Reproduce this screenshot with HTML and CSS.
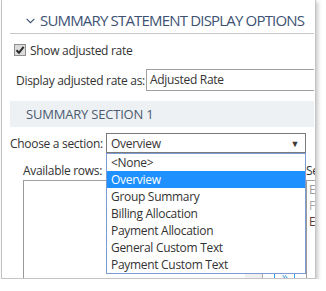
FILE: index.html
```html
<!DOCTYPE html>
<html>
<head>
<meta charset="utf-8">
<link rel="stylesheet" href="styles.css">
</head>
<body>
<div class="panel">
  <div class="title">
    <svg class="chev" width="9" height="6" viewBox="0 0 9 6"><polyline points="0.6,0.8 4.5,4.7 8.4,0.8" fill="none" stroke="#3d5273" stroke-width="1.1"/></svg>
    <span>SUMMARY STATEMENT DISPLAY OPTIONS</span>
  </div>
  <div class="check-row">
    <span class="cb"><svg width="10" height="10" viewBox="0 0 10 10"><polyline points="1.5,5.2 4,7.8 8.6,1.8" fill="none" stroke="#2b2b2b" stroke-width="2"/></svg></span>
    <span>Show adjusted rate</span>
  </div>
  <div class="field-row">
    <span class="label">Display adjusted rate as:</span>
    <div class="input">Adjusted Rate</div>
  </div>
  <div class="section-head">SUMMARY SECTION 1</div>
  <div class="choose-row">
    <span class="label">Choose a section:</span>
    <div class="select">
      <span>Overview</span>
      <span class="arrow">&#9660;</span>
      <ul class="dropdown">
        <li>&lt;None&gt;</li>
        <li class="hl">Overview</li>
        <li>Group Summary</li>
        <li>Billing Allocation</li>
        <li>Payment Allocation</li>
        <li>General Custom Text</li>
        <li>Payment Custom Text</li>
      </ul>
    </div>
  </div>
  <div class="rows">
    <div class="avail">
      <div class="col-label">Available rows:</div>
      <div class="listbox"></div>
    </div>
    <div class="buttons">
      <div class="btn-row">
        <span class="btn gray"></span>
        <span class="btn blue">&raquo;</span>
      </div>
    </div>
    <div class="selected">
      <div class="col-label">Selected rows:</div>
      <div class="listbox sel">
        <div class="item i1">Eligibility</div>
        <div class="item i2">Fees</div>
        <div class="item i3">Expenses</div>
      </div>
    </div>
  </div>
</div>
</body>
</html>
```
FILE: styles.css
```css
html, body {
  margin: 0;
  padding: 0;
  background: #ffffff;
}
body {
  font-family: "Open Sans", "Noto Sans", sans-serif;
  font-size: 12px;
  letter-spacing: -0.3px;
  color: #333333;
}
.panel {
  margin-left: 1px;
  width: 315px;
  height: 279px;
  box-sizing: border-box;
  border-left: 1px solid #c4c4c4;
  border-right: 1px solid #c4c4c4;
  border-bottom: 1px solid #c4c4c4;
  box-shadow: 2px 2px 4px rgba(0, 0, 0, 0.22);
  padding: 0 1px 0 8px;
  overflow: hidden;
  position: relative;
}
.title {
  border-bottom: 1px solid #c8c8c8;
  display: flex;
  align-items: center;
  padding-left: 16px;
  padding-top: 7px;
  box-sizing: border-box;
  height: 34px;
  color: #3d5273;
  font-size: 15px;
  letter-spacing: -0.82px;
  white-space: nowrap;
}
.chev {
  margin-right: 5px;
  margin-top: 2px;
}
.check-row {
  margin-top: 6px;
  height: 20px;
  display: flex;
  align-items: center;
  padding-left: 4px;
  gap: 4px;
  white-space: nowrap;
}
.cb {
  width: 12px;
  height: 12px;
  box-sizing: border-box;
  border: 1px solid #8e8e8e;
  background: #dcdcdc;
  display: flex;
  align-items: center;
  justify-content: center;
}
.label {
  white-space: nowrap;
  flex-shrink: 0;
}
.field-row {
  margin-top: 9px;
  display: flex;
  align-items: center;
  padding-left: 6px;
}
.field-row .label {
  width: 130px;
}
.input {
  flex: 1;
  height: 22px;
  box-sizing: border-box;
  border: 1px solid #a0a0a0;
  border-right: none;
  padding-left: 3px;
  line-height: 20px;
}
.section-head {
  margin-top: 10px;
  height: 26px;
  background: #eef1f4;
  color: #4b5b70;
  font-size: 13px;
  line-height: 27px;
  padding-left: 16px;
  letter-spacing: -0.2px;
}
.choose-row {
  margin-top: 6px;
  display: flex;
  align-items: center;
}
.choose-row .label {
  width: 96px;
}
.select {
  position: relative;
  width: 200px;
  height: 20px;
  box-sizing: border-box;
  border: 1px solid #7a7a7a;
  display: flex;
  align-items: center;
  justify-content: space-between;
  padding: 0 6px 0 4px;
}
.arrow {
  font-size: 9px;
  color: #3a3a3a;
}
.dropdown {
  position: absolute;
  left: -1px;
  top: calc(100% + 1px);
  width: 200px;
  box-sizing: border-box;
  margin: 0;
  padding: 0;
  list-style: none;
  background: #ffffff;
  border: 1px solid #7d9cd2;
  z-index: 5;
}
.dropdown li {
  height: 17px;
  line-height: 17px;
  padding-left: 4px;
  white-space: nowrap;
}
.dropdown li.hl {
  background: #1e90ff;
  color: #ffffff;
}
.rows {
  margin-top: 9px;
  display: grid;
  grid-template-columns: 220px 63px 80px;
  padding-left: 13px;
}
.col-label {
  height: 18px;
  line-height: 18px;
  white-space: nowrap;
}
.listbox {
  height: 120px;
  border-top: 1px solid #a0a0a0;
  border-left: 1px solid #9a9a9a;
}
.buttons {
  padding-top: 104px;
}
.btn-row {
  display: flex;
  height: 24px;
  padding-left: 2px;
}
.btn {
  display: block;
  height: 24px;
  box-sizing: border-box;
}
.btn.gray {
  width: 18px;
  background: #f0f0f0;
  border-right: 1px solid #a8a8a8;
}
.btn.blue {
  margin-left: 11px;
  width: 21px;
  border-left: 1px solid #3d9be0;
  border-right: 1px solid #3d9be0;
  color: #3d9be0;
  text-align: center;
  font-size: 12px;
  line-height: 10px;
  padding-top: 6px;
}
.sel {
  padding-top: 1px;
  padding-left: 2px;
}
.item {
  height: 16px;
  line-height: 16px;
  white-space: nowrap;
}
.i1 { color: #9a9a9a; }
.i2 { color: #a8a8a8; }
.i3 { color: #6b3a2c; }
```
